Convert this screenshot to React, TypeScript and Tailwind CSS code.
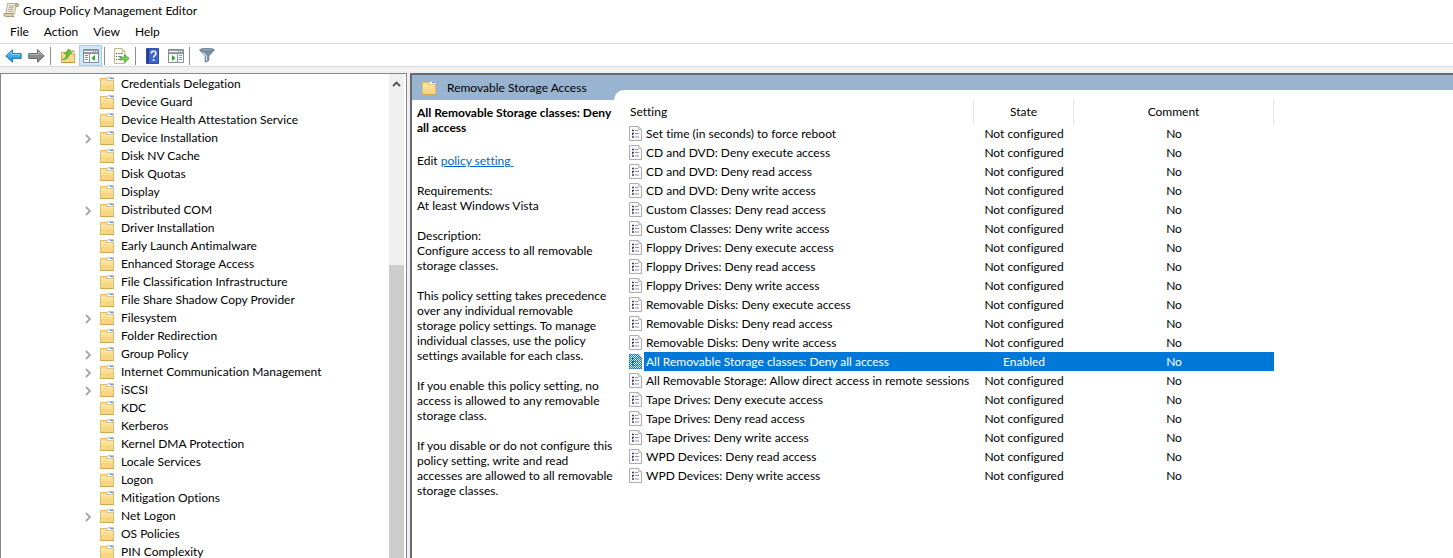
import React from "react";

type TreeEntry = { name: string; expandable?: boolean };
type Policy = { name: string; state?: string; comment?: string };

const tree: TreeEntry[] = [
  { name: "Credentials Delegation" },
  { name: "Device Guard" },
  { name: "Device Health Attestation Service" },
  { name: "Device Installation", expandable: true },
  { name: "Disk NV Cache" },
  { name: "Disk Quotas" },
  { name: "Display" },
  { name: "Distributed COM", expandable: true },
  { name: "Driver Installation" },
  { name: "Early Launch Antimalware" },
  { name: "Enhanced Storage Access" },
  { name: "File Classification Infrastructure" },
  { name: "File Share Shadow Copy Provider" },
  { name: "Filesystem", expandable: true },
  { name: "Folder Redirection" },
  { name: "Group Policy", expandable: true },
  { name: "Internet Communication Management", expandable: true },
  { name: "iSCSI", expandable: true },
  { name: "KDC" },
  { name: "Kerberos" },
  { name: "Kernel DMA Protection" },
  { name: "Locale Services" },
  { name: "Logon" },
  { name: "Mitigation Options" },
  { name: "Net Logon", expandable: true },
  { name: "OS Policies" },
  { name: "PIN Complexity" },
];

const policies: Policy[] = [
  { name: "Set time (in seconds) to force reboot" },
  { name: "CD and DVD: Deny execute access" },
  { name: "CD and DVD: Deny read access" },
  { name: "CD and DVD: Deny write access" },
  { name: "Custom Classes: Deny read access" },
  { name: "Custom Classes: Deny write access" },
  { name: "Floppy Drives: Deny execute access" },
  { name: "Floppy Drives: Deny read access" },
  { name: "Floppy Drives: Deny write access" },
  { name: "Removable Disks: Deny execute access" },
  { name: "Removable Disks: Deny read access" },
  { name: "Removable Disks: Deny write access" },
  { name: "All Removable Storage classes: Deny all access", state: "Enabled" },
  { name: "All Removable Storage: Allow direct access in remote sessions" },
  { name: "Tape Drives: Deny execute access" },
  { name: "Tape Drives: Deny read access" },
  { name: "Tape Drives: Deny write access" },
  { name: "WPD Devices: Deny read access" },
  { name: "WPD Devices: Deny write access" },
];

const description: string[][] = [
  ["Requirements:", "At least Windows Vista"],
  ["Description:", "Configure access to all removable", "storage classes."],
  [
    "This policy setting takes precedence",
    "over any individual removable",
    "storage policy settings. To manage",
    "individual classes, use the policy",
    "settings available for each class.",
  ],
  ["If you enable this policy setting, no", "access is allowed to any removable", "storage class."],
  [
    "If you disable or do not configure this",
    "policy setting, write and read",
    "accesses are allowed to all removable",
    "storage classes.",
  ],
];

function ScrollIcon() {
  return (
    <svg width="16" height="16" viewBox="0 0 16 16" aria-hidden="true">
      <path d="M4.500 1.500h9.500c1 0 1.500.7 1.500 1.500s-.5 1.500-1.500 1.500h-1L11.500 12H3z" fill="#f5ebcf" stroke="#a89c80" strokeWidth=".8" />
      <path d="M13 1.500c-1 .5-1 2.500-.5 3h1.800c1-.3 1.400-2.300 0-3z" fill="#cfbf94" stroke="#8f8468" strokeWidth=".6" />
      <path d="M1.200 11.500H10c-.6 1.200-.2 2.800 1 3H2.200c-1.500-.3-1.700-2-1-3z" fill="#dccfa9" stroke="#978b6d" strokeWidth=".8" />
      <path d="M6 4h5M5.700 5.800h5M5.400 7.600h5M5.100 9.400h5" stroke="#a5a5ad" strokeWidth=".9" />
    </svg>
  );
}

function ArrowIcon({ back }: { back?: boolean }) {
  return back ? (
    <svg width="17" height="14" viewBox="0 0 17 14" aria-hidden="true">
      <path d="M.8 7 7.500.8v3.700h8.700v5H7.500v3.700z" fill="#2f9fe0" stroke="#2380bd" strokeLinejoin="round" />
      <path d="M2.500 6.500 6.500 2.800v2.700h8.700" fill="none" stroke="#86d3f8" />
      <path d="M3 7h12.500" stroke="#4fbaf0" />
    </svg>
  ) : (
    <svg width="17" height="14" viewBox="0 0 17 14" aria-hidden="true">
      <path d="M16.200 7 9.500.8v3.700H.8v5h8.700v3.700z" fill="#8b8b8b" stroke="#6a6a6a" strokeLinejoin="round" />
      <path d="M1.800 5.500h8.700V2.800l4 3.700" fill="none" stroke="#b9b9b9" />
    </svg>
  );
}

function FolderIcon() {
  return (
    <svg width="15" height="14" viewBox="0 0 15 14" aria-hidden="true">
      <path d="M.5 1.500h6l1 1h6v11H.5z" fill="#fbdf92" stroke="#dfbd6e" />
      <path d="M1 8h12v5H1z" fill="#f6d583" />
      <path d="M6.500 3.500 8 .5h5.500v3z" fill="#fff" stroke="#cdb67c" strokeWidth=".8" />
      <path d="M10 1.500h3" stroke="#4b98e0" />
      <path d="M1 4.500h12" stroke="#fdeaaf" />
      <path d="M.5 13.500H14" stroke="#cfa650" />
    </svg>
  );
}

function UpFolderIcon() {
  return (
    <svg width="16" height="16" viewBox="0 0 16 16" aria-hidden="true">
      <path d="M1.500 4.500h5l1 1.500h7v8.500h-13z" fill="#f8da88" stroke="#d5ad54" />
      <path d="M9.500 2.500h4.500V6H9.500z" fill="#fff" stroke="#d0b070" strokeWidth=".8" />
      <path d="M11.500 3.800h2.200" stroke="#4b98e0" />
      <path d="M2 14.500h12.500" stroke="#bd9037" />
      <path d="M2.500 11.300C5 10.800 6.300 8.800 6.600 6L4.300 6 8.800.8 12 5.200 9.600 5.500C9 9.500 6.300 12 2.500 11.300z" fill="#5ec13b" stroke="#3f9d2a" strokeWidth=".6" />
    </svg>
  );
}

function PaneIcon({ left }: { left?: boolean }) {
  return (
    <svg width="16" height="14" viewBox="0 0 16 14" aria-hidden="true">
      <path d="M.5.5h15v13H.5z" fill="#fff" stroke="#868d95" />
      <path d="M1 1h14v3H1z" fill="#9aa1a8" />
      <path d="M1 2.500h9M11 2.500h1M13 2.500h1" stroke="#f3f5f6" />
      <path d="M.5 4.500h15" stroke="#868d95" />
      {left ? (
        <>
          <path d="M6.500 5v8.500" stroke="#868d95" />
          <path d="M2 6.500h3M2 8.500h3M2 10.500h3" stroke="#868d95" />
          <path d="M12 6v6L8.500 9z" fill="#2fa321" />
        </>
      ) : (
        <>
          <path d="M9.500 5v8.500" stroke="#868d95" />
          <path d="M11 6.500h3M11 8.500h3M11 10.500h3" stroke="#6f9cc0" />
          <path d="M4 6v6l3.500-3z" fill="#2fa321" />
        </>
      )}
    </svg>
  );
}

function ExportIcon() {
  return (
    <svg width="17" height="16" viewBox="0 0 17 16" aria-hidden="true">
      <path d="M1.500.5H9l3 3v12H1.500z" fill="#fffdf1" stroke="#c2b992" />
      <path d="M9 .5v3h3" fill="#e7e1c8" stroke="#c2b992" />
      <path d="M3 5.500h1M3 8.500h1M3 11.500h1" stroke="#55555f" />
      <path d="M5 5.500h5M5 8.500h4M5 11.500h4" stroke="#8b88a8" />
      <path d="M7 9.200h4.500V6.500l4.700 4-4.700 4v-2.700H7z" fill="#6ed04f" stroke="#45a534" strokeWidth=".8" />
    </svg>
  );
}

function HelpIcon() {
  return (
    <svg width="13" height="16" viewBox="0 0 13 16" aria-hidden="true">
      <path d="M.5.5h12v15H.5z" fill="#3f66cf" stroke="#2f4ea8" />
      <path d="M1 1h2v14H1z" fill="#263f92" />
      <path d="M5.200 5.500C5.200 4 6.200 3.200 7.500 3.200s2.400.8 2.400 2.200c0 2-2.300 2.200-2.300 4.200M7.600 11.200V13" fill="none" stroke="#fff" strokeWidth="1.600" />
    </svg>
  );
}

function FilterIcon() {
  return (
    <svg width="16" height="15" viewBox="0 0 16 15" aria-hidden="true">
      <path d="M.8 2 6.200 8v6.200l3.600-1.700V8l5.400-6z" fill="#7590a8" stroke="#5d7488" strokeWidth=".8" />
      <ellipse cx="8" cy="1.900" rx="7.300" ry="1.500" fill="#8fa5b6" stroke="#5d7488" strokeWidth=".8" />
      <path d="m4 4.500 3.500 3.700v4.500" fill="none" stroke="#d5e0e8" strokeWidth="1.200" />
    </svg>
  );
}

function PolicyIcon({ selected }: { selected?: boolean }) {
  return (
    <svg width="13" height="15" viewBox="0 0 13 15" aria-hidden="true">
      <defs>
        <pattern id="dither" width="2" height="2" patternUnits="userSpaceOnUse">
          <path d="M0 0h1v1H0zM1 1h1v1H1z" fill="#0078d7" shapeRendering="crispEdges" />
        </pattern>
      </defs>
      <path d="M.5.5H9.500L12.500 3.500v11H.5z" fill="#fafafa" stroke="#adadad" />
      <path d="M9.500 .5v3h3" fill="#e6e6e6" stroke="#bdbdbd" />
      <path d="M3 4.500h2M3 7.500h2M3 8.500h1M3 11h2" stroke="#3d3d5e" strokeWidth="1.400" />
      <path d="M6 4.500h3M6 7.500h4M6 11h4" stroke="#968fae" />
      {selected && <path d="M0 0h9.500L13 3.500V15H0z" fill="url(#dither)" />}
    </svg>
  );
}

function ToolButton({ label, active, children }: { label: string; active?: boolean; children: React.ReactNode }) {
  return (
    <button
      type="button"
      aria-label={label}
      aria-pressed={active}
      className={
        active
          ? "flex h-[21px] w-[23px] items-center justify-center border border-[#99d1ff] bg-[#cce8ff]"
          : "flex h-[21px] w-[23px] items-center justify-center"
      }
    >
      {children}
    </button>
  );
}

function Separator() {
  return <div className="mr-[5px] ml-[2px] h-[18px] w-px bg-[#8d8d8d]" />;
}

export default function App() {
  return (
    <div className="flex h-screen flex-col overflow-hidden bg-[#f0f0f0] font-['Lato','Open_Sans',sans-serif] text-[12px] leading-[15px] text-black [font-variant-ligatures:none]">
      <header className="bg-white">
        <div className="flex h-5 items-center gap-1 px-[3px]">
          <ScrollIcon />
          <h1>Group Policy Management Editor</h1>
        </div>
        <nav className="flex h-[23px] items-center gap-[15px] px-[10px]" aria-label="Main menu">
          <button type="button">File</button>
          <button type="button">Action</button>
          <button type="button">View</button>
          <button type="button">Help</button>
        </nav>
        <div className="flex h-6 items-center border-y border-[#dadada] px-[2px] pt-px" role="toolbar" aria-label="Tools">
          <ToolButton label="Back"><ArrowIcon back /></ToolButton>
          <ToolButton label="Forward"><ArrowIcon /></ToolButton>
          <Separator />
          <ToolButton label="Up one level"><UpFolderIcon /></ToolButton>
          <ToolButton label="Show or hide console tree" active><PaneIcon left /></ToolButton>
          <Separator />
          <ToolButton label="Export list"><ExportIcon /></ToolButton>
          <Separator />
          <ToolButton label="Help"><HelpIcon /></ToolButton>
          <ToolButton label="Show or hide action pane"><PaneIcon /></ToolButton>
          <Separator />
          <ToolButton label="Filter"><FilterIcon /></ToolButton>
        </div>
      </header>

      <div className="flex min-h-0 flex-1 gap-[3px] pt-[6px]">
        <aside className="flex w-[407px] shrink-0 border border-b-0 border-[#828790] bg-white pr-[2px]">
          <ul className="min-w-0 flex-1 pt-px" aria-label="Console tree">
            {tree.map((entry) => (
              <li key={entry.name} className="flex h-[18px] items-center pl-[83px]">
                <span className="flex w-4 items-center">
                  {entry.expandable && (
                    <button type="button" aria-label={`Expand ${entry.name}`} className="pt-[2px]">
                      <svg width="8" height="10" viewBox="0 0 8 10" aria-hidden="true">
                        <path d="m2 1 4 4-4 4" fill="none" stroke="#a6a6a6" strokeWidth="1.800" />
                      </svg>
                    </button>
                  )}
                </span>
                <FolderIcon />
                <span className="pb-px pl-[6px] whitespace-nowrap">{entry.name}</span>
              </li>
            ))}
          </ul>
          <div className="flex w-[15px] flex-col bg-[#f0f0f0]" aria-hidden="true">
            <div className="flex h-5 items-center justify-center">
              <svg width="9" height="6" viewBox="0 0 9 6">
                <path d="m1 5 3.500-3.500L8 5" fill="none" stroke="#505050" strokeWidth="1.800" />
              </svg>
            </div>
            <div className="mt-[171px] flex-1 bg-[#cdcdcd]" />
          </div>
        </aside>

        <main className="flex min-w-0 flex-1 flex-col border-t-2 border-l-2 border-[#696969] bg-white">
          <div className="flex h-[25px] bg-[#99b4d1]">
            <div className="flex w-[202px] shrink-0 items-center gap-[10px] pl-[10px]">
              <FolderIcon />
              <h2 className="whitespace-nowrap">Removable Storage Access</h2>
            </div>
            <div className="mt-[15px] flex-1 rounded-tl-[10px] bg-white" />
          </div>
          <div className="flex">
            <section className="w-[215px] shrink-0 pt-[5px] pl-[5px] whitespace-nowrap">
              <h3 className="font-bold">
                All Removable Storage classes: Deny
                <br />
                all access
              </h3>
              <p className="pt-[18px] pb-[15px]">
                Edit{" "}
                <a href="#policy" className="text-[#0066cc] underline">
                  policy setting{"\u00a0"}
                </a>
              </p>
              {description.map((lines) => (
                <p key={lines[0]} className="pb-[15px]">
                  {lines.map((line) => (
                    <span key={line} className="block">{line}</span>
                  ))}
                </p>
              ))}
            </section>
            <table className="w-[647px] table-fixed border-separate border-spacing-0 self-start whitespace-nowrap">
              <colgroup>
                <col className="w-[17px]" />
                <col className="w-[330px]" />
                <col className="w-[100px]" />
                <col className="w-[200px]" />
              </colgroup>
              <thead>
                <tr className="h-6">
                  <th colSpan={2} className="border-r border-[#e5e5e5] p-0 pb-[2px] pl-[3px] text-left font-normal">Setting</th>
                  <th className="border-r border-[#e5e5e5] p-0 pb-[2px] font-normal">State</th>
                  <th className="border-r border-[#e5e5e5] p-0 pb-[2px] font-normal">Comment</th>
                </tr>
              </thead>
              <tbody>
                {policies.map((policy) => {
                  const selected = policy.state === "Enabled";
                  const cell = selected ? "bg-[#0078d7] p-0 text-white" : "p-0";
                  return (
                    <tr key={policy.name} className="h-[19px]" aria-selected={selected}>
                      <td className="p-0 pl-[2px]"><PolicyIcon selected={selected} /></td>
                      <td className={cell}><span className="pl-[2px]">{policy.name}</span></td>
                      <td className={`${cell} text-center`}>{policy.state ?? "Not configured"}</td>
                      <td className={`${cell} text-center`}>{policy.comment ?? "No"}</td>
                    </tr>
                  );
                })}
              </tbody>
            </table>
          </div>
        </main>
      </div>
    </div>
  );
}
